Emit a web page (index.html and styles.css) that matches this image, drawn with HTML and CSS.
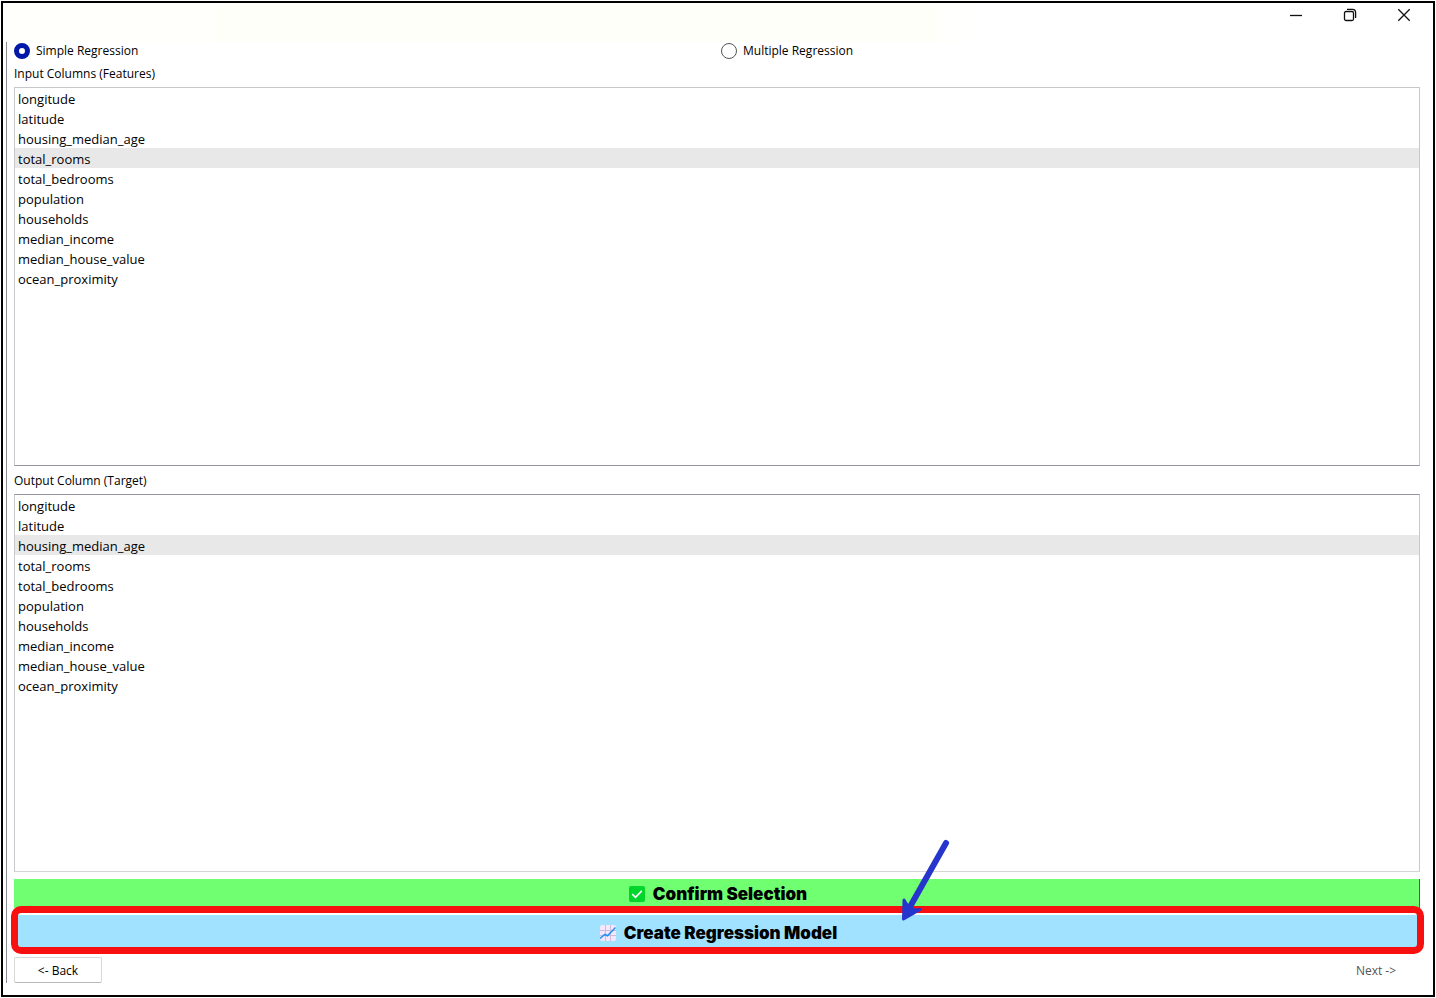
FILE: index.html
```html
<!DOCTYPE html>
<html lang="en">
<head>
<meta charset="utf-8">
<title>Regression</title>
<link rel="stylesheet" href="styles.css">
</head>
<body>
<div class="window">
  <header class="titlebar">
    <button class="win-btn" type="button" aria-label="Minimize">
      <svg width="14" height="14" viewBox="0 0 14 14"><path d="M1 7.500H13"/></svg>
    </button>
    <button class="win-btn" type="button" aria-label="Restore">
      <svg width="14" height="14" viewBox="0 0 14 14"><rect x="1.500" y="3.500" width="9" height="9" rx="1.500"/><path d="M4 1.300H9.500Q12.600 1.300 12.600 4.500V10"/></svg>
    </button>
    <button class="win-btn" type="button" aria-label="Close">
      <svg width="14" height="14" viewBox="0 0 14 14"><path d="M1.300 1.300L12.700 12.700M12.700 1.300L1.300 12.700"/></svg>
    </button>
  </header>
  <main class="page">
    <div class="modes">
      <label class="mode"><input class="radio" type="radio" name="mode" checked>Simple Regression</label>
      <label class="mode"><input class="radio" type="radio" name="mode">Multiple Regression</label>
    </div>
    <label class="caption" for="features">Input Columns (Features)</label>
    <select class="list" id="features" size="10">
      <option>longitude</option>
      <option>latitude</option>
      <option>housing_median_age</option>
      <option selected>total_rooms</option>
      <option>total_bedrooms</option>
      <option>population</option>
      <option>households</option>
      <option>median_income</option>
      <option>median_house_value</option>
      <option>ocean_proximity</option>
    </select>
    <label class="caption" for="target">Output Column (Target)</label>
    <select class="list list-target" id="target" size="10">
      <option>longitude</option>
      <option>latitude</option>
      <option selected>housing_median_age</option>
      <option>total_rooms</option>
      <option>total_bedrooms</option>
      <option>population</option>
      <option>households</option>
      <option>median_income</option>
      <option>median_house_value</option>
      <option>ocean_proximity</option>
    </select>
    <button class="action confirm" type="button">
      <svg width="16" height="16" viewBox="0 0 16 16"><rect width="16" height="16" rx="2" fill="#00d52c"/><path d="M3.200 8.200L6.500 11.300L12.800 4.800" fill="none" stroke="#fff" stroke-width="1.700"/></svg>
      Confirm Selection
    </button>
    <div class="create-wrap">
      <button class="action create" type="button">
        <svg width="16" height="16" viewBox="0 0 16 16"><rect width="16" height="16" rx="2" fill="#f3e8fb"/><path d="M5.500 0V16M10.500 0V16M0 5.500H16M0 10.500H16" stroke="#cdbbd9" stroke-width="1"/><path d="M0 13.500L4.800 9.500L7.500 10.800L15.500 2.500" fill="none" stroke="#1e90f5" stroke-width="1.500"/></svg>
        Create Regression Model
      </button>
      <div class="highlight"></div>
      <svg class="arrow" width="50" height="84" viewBox="0 0 50 84"><path d="M46 4L11 66" fill="none" stroke="#2636cc" stroke-width="6" stroke-linecap="round"/><path d="M4 61L3.500 80L20 70.500Q13 72 10 68Q7 67 4 61Z" fill="#2636cc" stroke="#2636cc" stroke-width="3" stroke-linejoin="round"/></svg>
    </div>
    <footer class="nav">
      <button class="nav-btn back" type="button">&lt;- Back</button>
      <button class="nav-btn next" type="button" disabled>Next -&gt;</button>
    </footer>
  </main>
</div>
</body>
</html>
```
FILE: styles.css
```css
* {
  box-sizing: border-box;
}

body {
  margin: 0;
  padding: 1px;
  height: 100vh;
  background: #fff;
  color: #000;
  font-family: "Open Sans", "Noto Sans", sans-serif;
  font-size: 12px;
}

button,
select {
  font: inherit;
  color: inherit;
}

.window {
  display: flex;
  flex-direction: column;
  height: 100%;
  border: 2px solid #000;
}

.titlebar {
  display: flex;
  justify-content: flex-end;
  height: 39px;
  padding-right: 2px;
  background: linear-gradient(to right, #fffffc 14%, #fffffa 15%, #fffffa 65%, #fff 68%);
}

.win-btn {
  display: flex;
  align-items: center;
  justify-content: center;
  width: 54px;
  height: 24px;
  padding: 0;
  border: 0;
  background: none;
}

.win-btn svg {
  fill: none;
  stroke: #111;
  stroke-width: 1.3px;
}

.page {
  flex: 1;
  display: flex;
  flex-direction: column;
  min-height: 0;
  margin: 0 0 12px 3px;
  padding: 0 13px 0 7px;
  border-left: 1px solid #8c8c94;
}

.modes {
  display: grid;
  grid-template-columns: 1fr 1fr;
  gap: 8px;
}

.mode {
  display: flex;
  align-items: center;
  gap: 6px;
  height: 17px;
}

.radio {
  appearance: none;
  width: 16px;
  height: 16px;
  margin: 0;
  border: 1px solid #555;
  border-radius: 50%;
  background: #fff;
}

.radio:checked {
  border: 5px solid #0019a8;
}

.caption {
  padding-top: 1px;
  line-height: 27px;
}

.list {
  flex: 1 1 0;
  min-height: 0;
  width: 100%;
  padding: 0;
  border: 1px solid #c8c8cc;
  border-bottom-color: #92959c;
  border-radius: 0;
  background: #fff;
  font-size: 13px;
  outline: 0;
}

.list-target {
  border-top-color: #92959c;
  border-bottom-color: #d5d5d8;
}

.list option {
  min-height: 20px;
  padding: 2px 3px 0;
  line-height: 18px;
}

.list option:checked {
  background: #e8e8e8 linear-gradient(#e8e8e8, #e8e8e8);
  color: #000;
}

.action {
  display: flex;
  align-items: center;
  justify-content: center;
  gap: 8px;
  width: 100%;
  padding: 0 0 0 3px;
  border: 0;
  color: #000;
  font-family: Inter, sans-serif;
  font-size: 17px;
  font-weight: 900;
}

.confirm {
  height: 29px;
  margin-top: 7px;
  border-right: 1px solid #2c7a2c;
  background: #70ff70;
}

.create-wrap {
  position: relative;
  margin: 6px 0 10px;
}

.create {
  height: 33px;
  padding-top: 4px;
  border-top: 1px solid #fff;
  background: #a0e2ff;
}

.highlight {
  position: absolute;
  inset: -8px -4px -7px -3px;
  border: 7px solid #f81010;
  border-radius: 10px;
  pointer-events: none;
}

.arrow {
  position: absolute;
  left: 63%;
  bottom: 24px;
  pointer-events: none;
}

.nav {
  display: flex;
  justify-content: space-between;
}

.nav-btn {
  width: 88px;
  height: 26px;
  padding: 0;
  border: 1px solid transparent;
  border-radius: 2px;
  background: none;
}

.back {
  border-color: #d8d8d8;
  border-bottom-color: #b8b8b8;
}

.next {
  color: #555;
}
```
